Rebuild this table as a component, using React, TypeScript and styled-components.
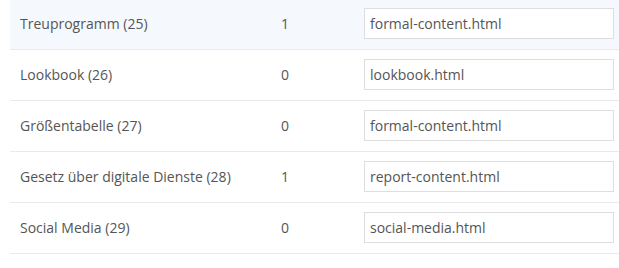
import React from 'react';
import styled, { createGlobalStyle } from 'styled-components';

type Template = {
  name: string;
  id: number;
  count: number;
  file: string;
};

const templates: Template[] = [
  { name: 'Treuprogramm', id: 25, count: 1, file: 'formal-content.html' },
  { name: 'Lookbook', id: 26, count: 0, file: 'lookbook.html' },
  { name: 'Größentabelle', id: 27, count: 0, file: 'formal-content.html' },
  { name: 'Gesetz über digitale Dienste', id: 28, count: 1, file: 'report-content.html' },
  { name: 'Social Media', id: 29, count: 0, file: 'social-media.html' },
];

const App: React.FC = () => (
  <>
    <GlobalStyle />
    <Wrap>
      <Table>
        <tbody>
          {templates.map((t, i) => (
            <Row key={t.id} $active={i === 0}>
              <NameCell>
                {t.name} ({t.id})
              </NameCell>
              <CountCell>{t.count}</CountCell>
              <FileCell>
                <FileInput defaultValue={t.file} />
              </FileCell>
            </Row>
          ))}
        </tbody>
      </Table>
    </Wrap>
  </>
);

export default App;

const GlobalStyle = createGlobalStyle`
  body {
    margin: 0;
    background: #fff;
    font-family: "Open Sans", "Liberation Sans", sans-serif;
    font-size: 14px;
    color: #555;
  }
`;

/* the list is scrolled a couple of pixels in the original view */
const Wrap = styled.div`
  padding-left: 10px;
  margin-top: -2px;
`;

const Table = styled.table`
  width: 609px;
  border-collapse: collapse;
  table-layout: fixed;
`;

const Row = styled.tr<{ $active?: boolean }>`
  height: 51px;
  background: ${({ $active }) => ($active ? '#f5f9fd' : 'transparent')};
  border-bottom: 1px solid #e9eaec;
`;

const Cell = styled.td`
  padding: 0 10px;
  vertical-align: middle;
  white-space: nowrap;
`;

const NameCell = styled(Cell)`
  width: 241px;
`;

const CountCell = styled(Cell)`
  width: 63px;
`;

const FileCell = styled(Cell)`
  padding-right: 6px;
`;

const FileInput = styled.input`
  box-sizing: border-box;
  display: block;
  width: 250px;
  height: 31px;
  padding: 0 5px;
  border: 1px solid #dedede;
  background: #fff;
  font-family: "Open Sans", "Liberation Sans", sans-serif;
  font-size: 14px;
  color: #555;
  outline: none;
`;
